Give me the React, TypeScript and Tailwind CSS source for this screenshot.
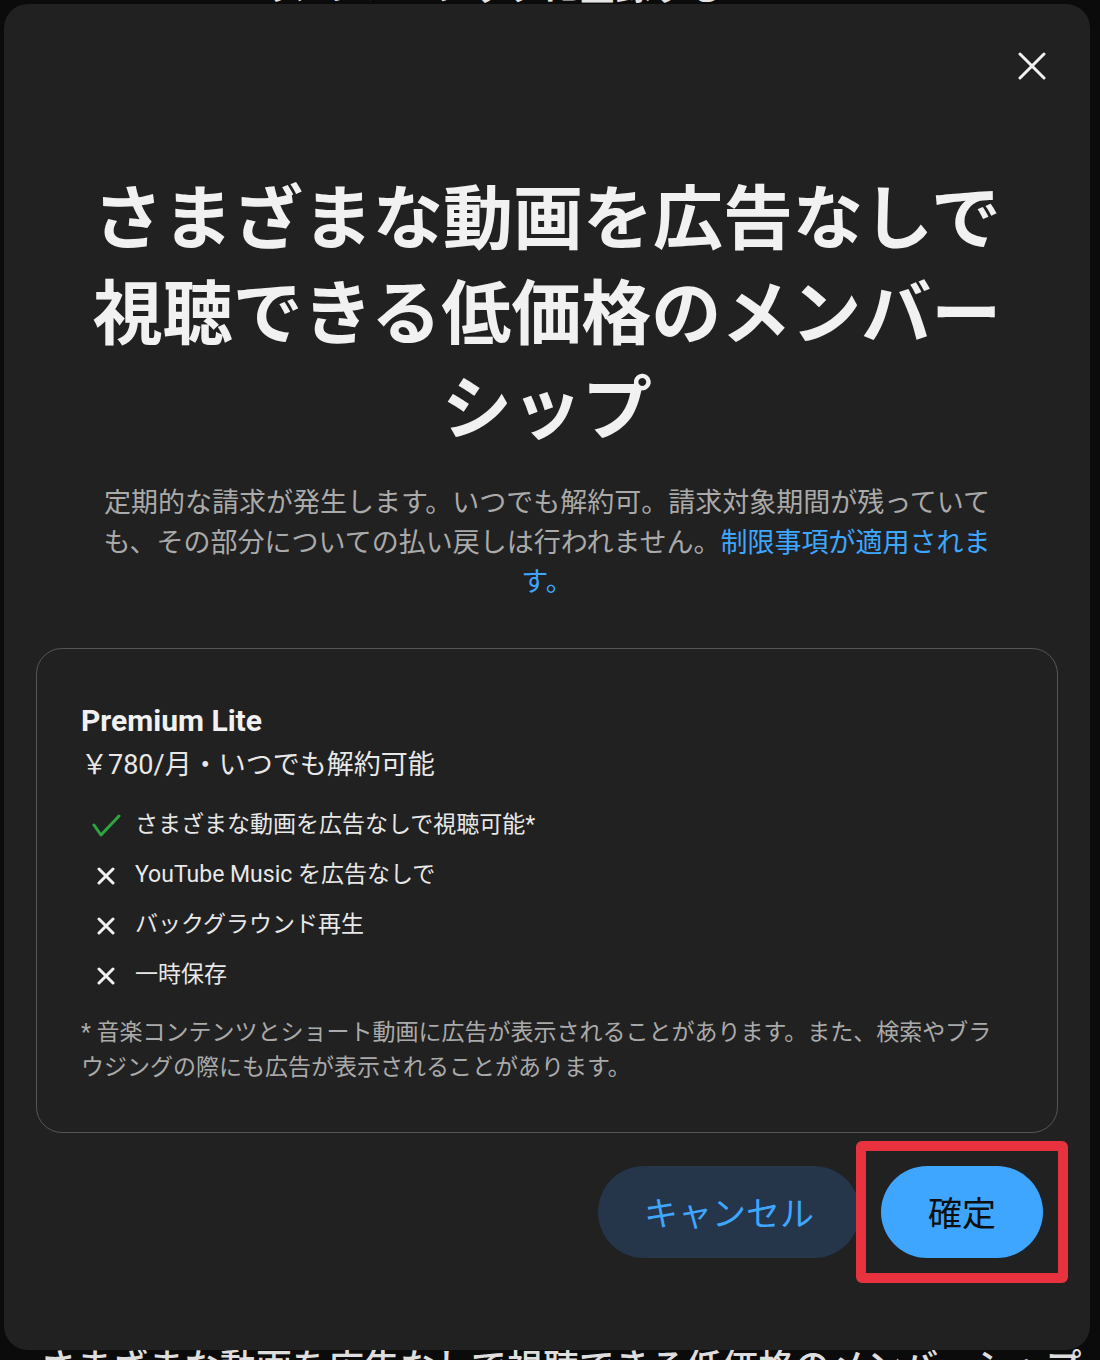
const features = [
  { ok: true, label: 'さまざまな動画を広告なしで視聴可能*' },
  { ok: false, label: 'YouTube Music を広告なしで' },
  { ok: false, label: 'バックグラウンド再生' },
  { ok: false, label: '一時保存' },
]

function CheckIcon() {
  return (
    <svg width="30" height="26" viewBox="0 0 30 26" fill="none">
      <polyline points="3,12 10,22 28,3" stroke="#2ba640" strokeWidth="3" strokeLinecap="round" strokeLinejoin="round" />
    </svg>
  )
}

function CrossIcon() {
  return (
    <svg width="18" height="18" viewBox="0 0 18 18" fill="none">
      <path d="M2 2 L16 16 M16 2 L2 16" stroke="#f1f1f1" strokeWidth="3" strokeLinecap="round" />
    </svg>
  )
}

function BackdropText() {
  return (
    <>
      <div className="absolute left-[30px] top-[-30px] z-0 whitespace-nowrap text-[36px] font-bold leading-[36px] text-[#e5e5e5]">
        Premium Lite のメンバーシップに登録する
      </div>
      <div className="absolute left-[40px] top-[1350px] z-0 whitespace-nowrap text-[36px] font-medium leading-[36px] text-[#dddddd]">
        さまざまな動画を広告なしで視聴できる低価格のメンバーシップ
      </div>
    </>
  )
}

export default function App() {
  return (
    <div className="relative min-h-[1360px] w-[1100px] overflow-hidden bg-[#0b0b0b] font-['Roboto','Noto_Sans_CJK_JP',sans-serif]">
      <BackdropText />
      <div className="relative z-10 ml-[4px] mt-[4px] w-[1086px] rounded-[24px] bg-[#212121] px-[32px] pb-[92px] pt-[38px]">
        <div className="flex justify-end">
          <button className="mr-[2px] flex h-12 w-12 items-center justify-center">
            <svg width="28" height="28" viewBox="0 0 28 28" fill="none">
              <path d="M2 2 L26 26 M26 2 L2 26" stroke="#f1f1f1" strokeWidth="3" strokeLinecap="round" />
            </svg>
          </button>
        </div>

        <h1 className="mx-auto mt-[76px] w-[930px] text-center font-['Noto_Sans_CJK_JP',sans-serif] text-[70px] font-bold leading-[95px] text-[#f1f1f1]">
          さまざまな動画を広告なしで視聴できる低価格のメンバーシップ
        </h1>

        <p className="mx-auto mt-[30px] w-[905px] text-center font-['Noto_Sans_CJK_JP',sans-serif] text-[27px] leading-[39.5px] text-[#aaaaaa]">
          定期的な請求が発生します。いつでも解約可。請求対象期間が残っていても、その部分についての払い戻しは行われません。
          <span className="text-[#3ea6ff]">制限事項が適用されます。</span>
        </p>

        <div className="mt-[48px] rounded-[26px] border-[1.5px] border-[#555555] px-[44px] pb-[47px] pt-[52px]">
          <div className="text-[30px] font-bold leading-[40px] text-[#f1f1f1]">Premium Lite</div>
          <div className="mt-[6px] text-[27px] leading-[36px] text-[#e8e8e8]">￥780/月・いつでも解約可能</div>

          <div className="mt-[18px] flex flex-col">
            {features.map((f) => (
              <div key={f.label} className="flex h-[50px] items-center gap-[14px] pl-[10px]">
                <div className="flex w-[30px] justify-center">
                  {f.ok ? <CheckIcon /> : <CrossIcon />}
                </div>
                <span className="text-[23px] text-[#e8e8e8]">{f.label}</span>
              </div>
            ))}
          </div>

          <p className="mt-[14px] text-[23px] leading-[35px] text-[#aaaaaa]">
            * 音楽コンテンツとショート動画に広告が表示されることがあります。また、検索やブラウジングの際にも広告が表示されることがあります。
          </p>
        </div>

        <div className="mt-[33px] flex justify-end gap-[21px] pr-[15px]">
          <button className="h-[92px] rounded-full bg-[#25354a] px-[46px] font-['Noto_Sans_CJK_JP',sans-serif] text-[34px] text-[#3ea6ff]">
            キャンセル
          </button>
          <div className="relative">
            <button className="h-[92px] rounded-full bg-[#3ea6ff] px-[47px] font-['Noto_Sans_CJK_JP',sans-serif] text-[34px] text-[#0f0f0f]">
              確定
            </button>
            <div className="pointer-events-none absolute -inset-[25px] rounded-[6px] border-[10px] border-[#e8333f]" />
          </div>
        </div>
      </div>
    </div>
  )
}
